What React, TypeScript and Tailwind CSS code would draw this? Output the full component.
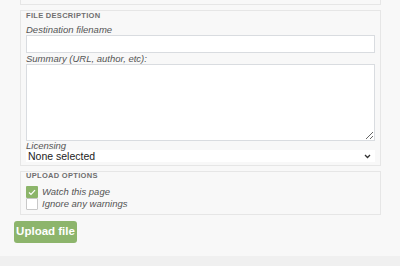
import React from 'react';

const fieldset = 'mx-[6px] border border-[#e6e6e6] bg-[#f8f8f8]';
const legend = 'text-[7.5px] font-bold uppercase tracking-[0.3px] text-[#6f6f6f]';
const label = 'block text-[9.5px] italic text-[#555]';

export default function App() {
  return (
    <div className="h-[266px] w-[400px] bg-[#f8f8f8] flex flex-col" style={{ fontFamily: '"Liberation Sans", Arial, sans-serif' }}>
      <div className="flex-1 pl-[14px] pr-[13px]">
        <div className={`${fieldset} h-[5px] border-t-0`} />

        <div className={`${fieldset} mt-[5px] px-[5px] pb-[3px]`}>
          <div className={`${legend} leading-[10px]`}>File description</div>
          <label className={`${label} mt-[3px] leading-[11px]`}>Destination filename</label>
          <input className="block h-[18px] w-full border border-[#d9dce0] bg-white" />
          <label className={`${label} leading-[11px]`}>Summary (URL, author, etc):</label>
          <textarea className="block h-[77px] w-full resize-y border border-[#d9dce0] bg-white" />
          <label className={`${label} leading-[9px]`}>Licensing</label>
          <div className="flex h-[12px] items-center justify-between bg-white pl-[2px] pr-[4px]">
            <span className="text-[10.5px] leading-[12px] text-[#222]">None selected</span>
            <svg width="7" height="5" viewBox="0 0 7 5">
              <path d="M1 1 L3.5 3.5 L6 1" fill="none" stroke="#333" strokeWidth="1.3" />
            </svg>
          </div>
        </div>

        <div className={`${fieldset} mt-[5px] px-[5px] pb-[4px]`}>
          <div className={`${legend} leading-[8px]`}>Upload options</div>
          <div className="mt-[6px] flex h-[12px] items-center gap-[4px]">
            <span className="flex h-[12px] w-[12px] items-center justify-center rounded-[1px] bg-[#8cb56a]">
              <svg width="8" height="7" viewBox="0 0 8 7">
                <path d="M1 3.5 L3 5.5 L7 1.2" fill="none" stroke="white" strokeWidth="1.2" />
              </svg>
            </span>
            <span className="text-[9.5px] italic text-[#555] leading-[12px]">Watch this page</span>
          </div>
          <div className="flex h-[12px] items-center gap-[4px]">
            <span className="h-[12px] w-[12px] rounded-[1px] border border-[#c8c8c8] bg-white" />
            <span className="text-[9.5px] italic text-[#555] leading-[12px]">Ignore any warnings</span>
          </div>
        </div>

        <button className="mt-[6px] flex h-[22px] w-[63px] items-center justify-center rounded-[3px] bg-[#8db56c] text-[11.5px] font-bold text-white">
          Upload file
        </button>
      </div>
      <div className="h-[10px] bg-[#f0f0f0]" />
    </div>
  );
}
